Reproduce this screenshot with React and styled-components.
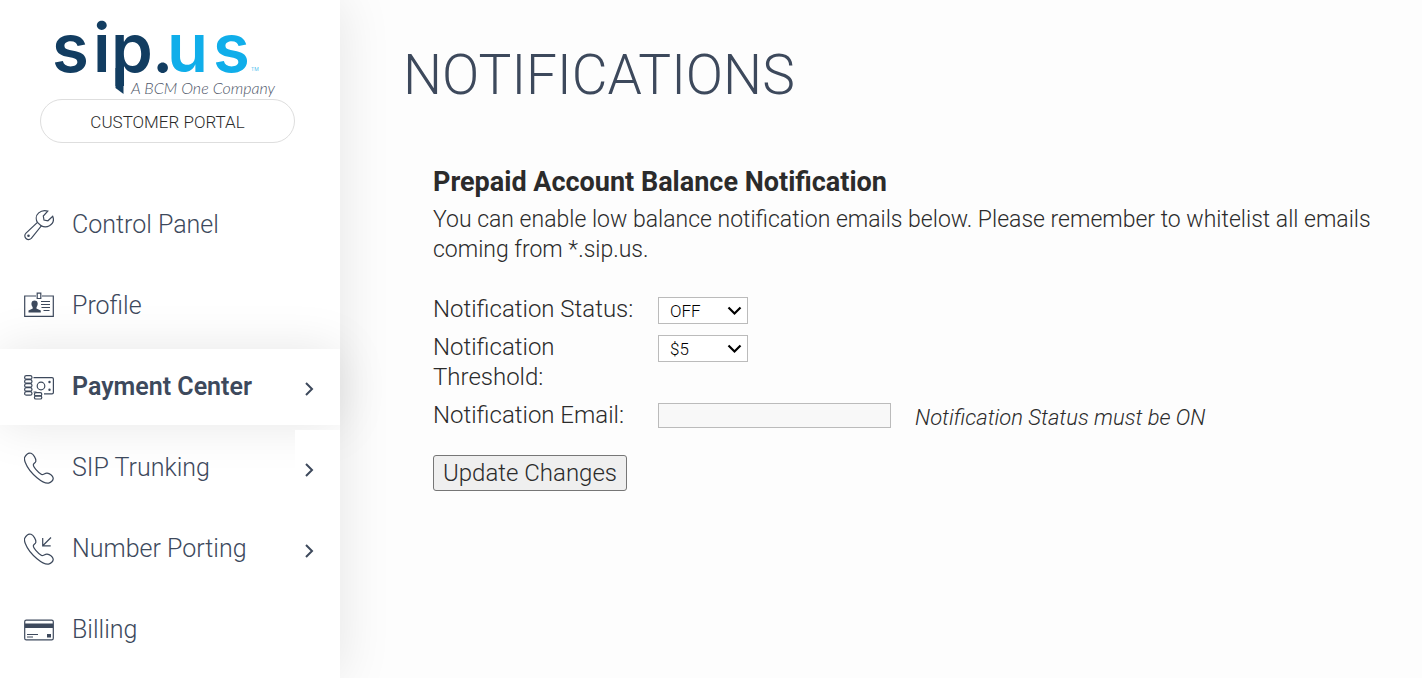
import React, { useState } from 'react';
import styled, { createGlobalStyle } from 'styled-components';

const GlobalStyle = createGlobalStyle`
  * {
    box-sizing: border-box;
  }

  body {
    margin: 0;
    background: #fdfdfd;
    color: #2b2b2b;
    font-family: Roboto, 'Liberation Sans', sans-serif;
    font-weight: 300;
  }
`;

const Layout = styled.div`
  display: flex;
  min-height: 100vh;
`;

const Sidebar = styled.aside`
  flex: 0 0 340px;
  background: #fff;
  box-shadow: 0 0 50px rgba(0, 0, 0, 0.1);
`;

const Brand = styled.header`
  display: flex;
  flex-direction: column;
  padding: 19px 45px 44px 40px;
`;

const Logo = styled.svg`
  display: block;
  width: 255px;
  height: 80px;
  overflow: visible;
`;

const PortalLink = styled.a`
  height: 44px;
  border: 1px solid #dedede;
  border-radius: 22px;
  color: #2b2b2b;
  font-size: 17px;
  line-height: 44px;
  text-align: center;
  text-decoration: none;
`;

const Menu = styled.ul`
  display: flex;
  flex-direction: column;
  gap: 5px;
  margin: 0;
  padding: 0;
  list-style: none;
`;

const MenuItem = styled.li`
  display: flex;
  height: 76px;
  background: ${props => props.$active ? '#fff' : 'transparent'};
  box-shadow: ${props => props.$active ? '0 0 50px rgba(0, 0, 0, 0.1)' : 'none'};
`;

const MenuLink = styled.a`
  display: flex;
  flex: 1;
  align-items: center;
  gap: 18px;
  padding-left: 24px;
  color: #3d495c;
  font-size: 25px;
  font-weight: ${props => props.$active ? 600 : 300};
  text-decoration: none;

  svg {
    flex: none;
    width: 30px;
    height: 32px;
  }

  span {
    padding-bottom: 2px;
  }
`;

const Toggle = styled.button`
  width: 45px;
  padding: 4px 16px 0 0;
  border: 0;
  background: #fff;

  svg {
    display: block;
    width: 28px;
    height: 20px;
  }
`;

const Main = styled.main`
  flex: 1;
  min-width: 0;
  padding: 40px 40px 40px 63px;
`;

const Title = styled.h1`
  margin: 0;
  color: #3d495c;
  font-size: 55px;
  font-weight: 300;
  line-height: 70px;
`;

const Section = styled.section`
  padding: 57px 0 0 30px;
`;

const SectionTitle = styled.h2`
  margin: 0 0 8px;
  font-size: 27px;
  font-weight: 700;
  line-height: 30px;
`;

const Text = styled.p`
  margin: 0 0 29px;
  font-size: 23px;
  line-height: 30px;
`;

const Fields = styled.div`
  display: grid;
  grid-template-columns: 210px 1fr;
  gap: 8px 15px;
  font-size: 24px;
  line-height: 30px;
`;

const Field = styled.div`
  display: flex;
  align-items: flex-start;
  gap: 24px;
  height: 30px;
  padding-top: 3px;
`;

const SelectBox = styled.div`
  position: relative;
  display: flex;

  svg {
    position: absolute;
    top: 7px;
    right: 6px;
    width: 15px;
    height: 13px;
    pointer-events: none;
  }
`;

const Select = styled.select`
  width: 90px;
  height: 27px;
  padding: 0 0 0 11px;
  border: 1px solid #bbb;
  border-radius: 0;
  background: #fff;
  color: #000;
  font: 300 17px Roboto, sans-serif;
  appearance: none;
`;

const Input = styled.input`
  width: 233px;
  height: 25px;
  border: 1px solid #bbb;
  background: #f8f8f8;
`;

const Note = styled.em`
  font-size: 22px;
  line-height: 30px;
`;

const Submit = styled.button`
  height: 36px;
  margin-top: 25px;
  padding: 0 9px;
  border: 1px solid #767676;
  border-radius: 3px;
  background: #efefef;
  color: #2b2b2b;
  font: 300 24px Roboto, sans-serif;
`;

const icons = {
  wrench: (
    <>
      <path d="M23.8 2.1 19.3 7l.7 4 3.9.8 4.8-4.6c1.5 3.8.1 7.6-3.3 9.6-2.7 1.5-5.6 1.3-8.1.1L7.3 29.4c-1.6 1.5-3.8 1.5-5.3.1-1.6-1.5-1.6-3.9 0-5.4l11.4-10.7c-1.9-3.2-1.3-7.2 1.3-9.5 2.7-2.4 6.1-2.8 9.1-1.8Z" />
      <path d="m13.4 13.4 4 3.6" />
      <circle cx="4.5" cy="26.7" r=".7" fill="currentColor" />
    </>
  ),
  badge: (
    <>
      <path d="M12 6H.7v20.3h28.6V6H18" />
      <path d="M13.2 3.2h3.6v5.3h-3.6z" />
      <path d="M4.5 22.5v-2l4.3-2.1-.2-1.4c-2.1-2.8-1.3-6.5 2-6.5s4.1 3.7 2 6.5l-.2 1.4 4.4 2.1v2Z" fill="currentColor" stroke="none" />
      <path d="M17 11.5h9M17 14.5h9M17.5 17.5H26M19.5 20.5h6" />
    </>
  ),
  money: (
    <>
      {[5, 9, 13, 17, 21].map(y => (
        <rect key={y} x=".6" y={y - 0.4} width="7.4" height="3.6" rx="1.8" />
      ))}
      <rect x="10.4" y="21.6" width="7.4" height="3.2" rx="1.6" />
      <rect x="10.4" y="24.8" width="7.4" height="3.2" rx="1.6" />
      <path d="M9.5 6.6H28q1.4 0 1.4 1.4v13.4q0 1.4-1.4 1.4h-8M9.5 21h3" />
      <circle cx="17" cy="15" r="3.8" />
      <circle cx="25.5" cy="11" r=".6" />
      <circle cx="25.5" cy="18.7" r=".6" />
    </>
  ),
  phone: (
    <path d="M.7 5.3C2.2 2.4 4.8.5 7 1.3c2.4 1 5.2 5.1 4.8 8-.3 1.6-2.1 1.9-2.5 3.5-.4 1.8 4.4 7.2 7.9 9.5 1.8 1.2 3.5-1.5 5.9-1.2 2.5.3 5.7 2.5 6.1 5 .2 2.2-2.3 4.5-4.6 5-2.9.6-7.5-2-11.6-5.4C7.5 21.2 3.2 15.4 1.3 10.5.6 8.7.1 6.9.7 5.3Z" />
  ),
  card: (
    <>
      <rect x=".7" y="6.2" width="28.6" height="19.6" rx="1.6" />
      <path d="M1 9.5h28V14H1z" fill="currentColor" stroke="none" />
      <path d="M3 20.5h11M3 23h6" />
      <path d="M23 20h4v3.5h-4z" fill="currentColor" stroke="none" />
    </>
  ),
};

icons.incoming = (
  <>
    {icons.phone}
    <path d="m27 4.5-8 8M18.7 5v7.8h8" />
  </>
);

const menu = [
  { label: 'Control Panel', icon: 'wrench' },
  { label: 'Profile', icon: 'badge' },
  { label: 'Payment Center', icon: 'money', active: true, children: true },
  { label: 'SIP Trunking', icon: 'phone', children: true },
  { label: 'Number Porting', icon: 'incoming', children: true },
  { label: 'Billing', icon: 'card' },
];

const BrandLogo = () => (
  <Logo viewBox="40 19 255 80" role="img" aria-label="sip.us, A BCM One Company">
    <g fontFamily="Inter, sans-serif" fontSize="67" fontWeight="600">
      <text y="72" fill="#123d61" x="52 93 111 152">sip.</text>
      <text y="72" fill="#10aeea" x="167 213">us</text>
    </g>
    <path d="M115.5 68h8v26l-8-6z" fill="#123d61" />
    <text x="251" y="71" fontSize="5" fill="#10aeea" fontFamily="Inter, sans-serif">TM</text>
    <text x="131" y="94" fontSize="16" fontStyle="italic" fill="#4f5869" fontFamily="Lato, sans-serif">A BCM One Company</text>
  </Logo>
);

const Dropdown = ({ options, ...props }) => (
  <SelectBox>
    <Select {...props}>
      {options.map(option => (
        <option key={option}>{option}</option>
      ))}
    </Select>
    <svg viewBox="0 0 15 13" fill="none" stroke="#000" strokeWidth="2.2">
      <path d="m1.5 3.5 6 6 6-6" />
    </svg>
  </SelectBox>
);

const App = () => {
  const [status, setStatus] = useState('OFF');
  const [threshold, setThreshold] = useState('$5');

  return (
    <Layout>
      <GlobalStyle />
      <Sidebar>
        <Brand>
          <BrandLogo />
          <PortalLink href="#portal">CUSTOMER PORTAL</PortalLink>
        </Brand>
        <nav>
          <Menu>
            {menu.map(item => (
              <MenuItem key={item.label} $active={item.active}>
                <MenuLink href="#menu" $active={item.active}>
                  <svg viewBox="0 0 30 32" fill="none" stroke="currentColor" strokeWidth="1.2">
                    {icons[item.icon]}
                  </svg>
                  <span>{item.label}</span>
                </MenuLink>
                {item.children && (
                  <Toggle type="button" aria-label={`Open ${item.label}`}>
                    <svg viewBox="0 0 28 20" fill="none" stroke="#3d495c" strokeWidth="2">
                      <path d="m11 4 6 6-6 6" />
                    </svg>
                  </Toggle>
                )}
              </MenuItem>
            ))}
          </Menu>
        </nav>
      </Sidebar>

      <Main>
        <Title>NOTIFICATIONS</Title>
        <Section>
          <SectionTitle>Prepaid Account Balance Notification</SectionTitle>
          <Text>
            You can enable low balance notification emails below. Please remember to whitelist all emails coming from *.sip.us.
          </Text>
          <form onSubmit={e => e.preventDefault()}>
            <Fields>
              <label htmlFor="status">Notification Status:</label>
              <Field>
                <Dropdown
                  id="status"
                  options={['OFF', 'ON']}
                  value={status}
                  onChange={e => setStatus(e.target.value)}
                />
              </Field>
              <label htmlFor="threshold">Notification Threshold:</label>
              <Field>
                <Dropdown
                  id="threshold"
                  options={['$5', '$10', '$20']}
                  value={threshold}
                  onChange={e => setThreshold(e.target.value)}
                />
              </Field>
              <label htmlFor="email">Notification Email:</label>
              <Field>
                <Input id="email" type="email" disabled={status === 'OFF'} />
                {status === 'OFF' && <Note>Notification Status must be ON</Note>}
              </Field>
            </Fields>
            <Submit type="submit">Update Changes</Submit>
          </form>
        </Section>
      </Main>
    </Layout>
  );
};

export default App;
